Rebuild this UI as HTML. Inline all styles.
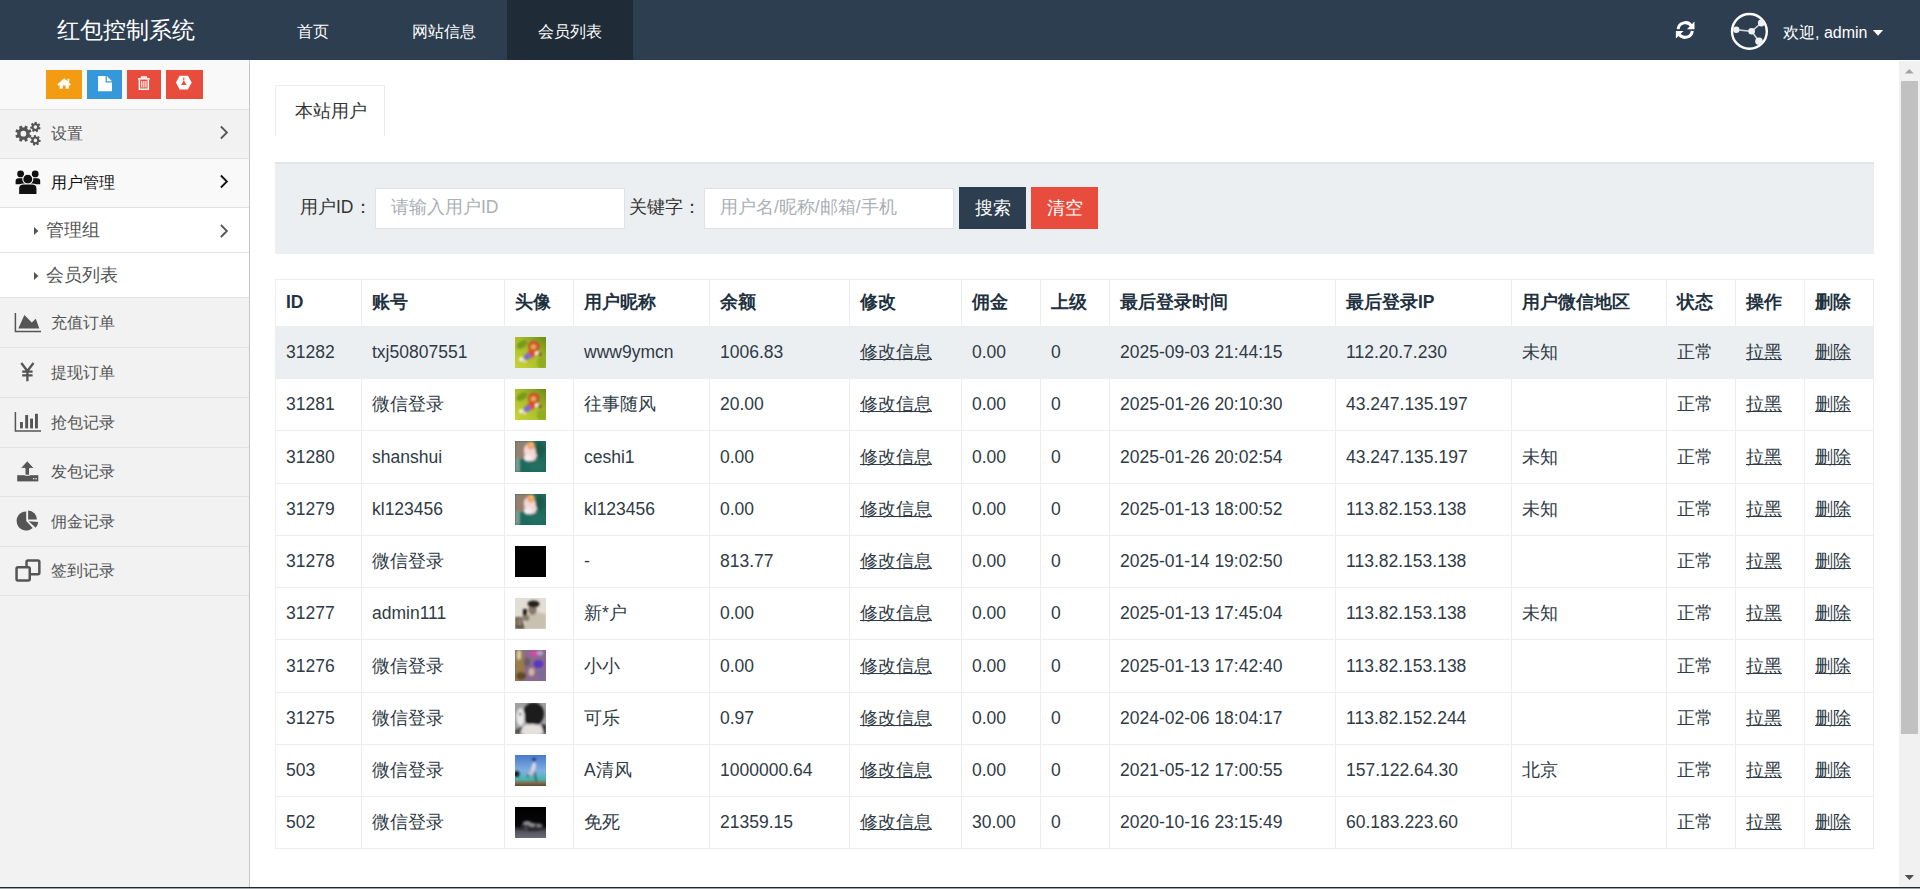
<!DOCTYPE html>
<html><head><meta charset="utf-8">
<style>
*{box-sizing:border-box;margin:0;padding:0}
html,body{width:1920px;height:889px;overflow:hidden;background:#fff;font-family:"Liberation Sans",sans-serif;color:#333}
.hdr{position:absolute;left:0;top:0;width:1920px;height:60px;background:#2c3e50;color:#fff}
.logo{position:absolute;left:57px;top:15px;font-size:23.2px;line-height:30px;white-space:nowrap}
.nav{position:absolute;top:0;height:60px;line-height:64px;font-size:16px;text-align:center;color:#fff}
.nav.act{background:#1f2b37}
.side{position:absolute;left:0;top:60px;width:250px;height:829px;background:#f2f2f2;border-right:1px solid #c6c6c6}
.tools{position:absolute;left:0;top:0;width:249px;height:50px;background:#f9f9f9;border-bottom:1px solid #e2e2e2}
.tb{position:absolute;top:10px;height:29px}
.tb svg{position:absolute;left:50%;top:50%;transform:translate(-50%,-50%)}
.mi{position:absolute;left:0;width:249px;border-bottom:1px solid #e2e2e2;font-size:16px;color:#555;white-space:nowrap}
.mi .t{position:absolute;left:51px;top:50%;transform:translateY(-50%);line-height:20px}
.mi .ic{position:absolute;left:15px;top:50%;transform:translateY(-50%)}
.mi .chev{position:absolute;left:219px;top:50%;transform:translateY(-50%)}
.main{position:absolute;left:250px;top:60px;width:1650px;height:829px;background:#fff}
.tab{position:absolute;left:275px;top:85px;width:110px;height:51px;border:1px solid #ececec;border-bottom:none;font-size:17.5px;color:#333}
.tab span{position:absolute;left:19px;top:15px;line-height:20px}
.panel{position:absolute;left:275px;top:162px;width:1599px;height:92px;background:#eceff1;border-top:2px solid #e3e6e8}
.lbl{position:absolute;font-size:17.5px;color:#333;line-height:20px;white-space:nowrap}
.inp{position:absolute;top:188px;height:41px;background:#fff;border:1px solid #dfe3e6;font-size:17.5px;color:#aab0b5;white-space:nowrap}
.inp span{position:absolute;left:15px;top:8px;line-height:20px}
.btn{position:absolute;top:187px;height:42px;color:#fff;font-size:17.5px;text-align:center;line-height:42px}
.vl{position:absolute;top:279px;width:1px;height:570px;background:#ededed}
.hl{position:absolute;left:275px;width:1599px;height:1px;background:#ededed}
.hi{position:absolute;left:275px;top:326px;width:1599px;height:52px;background:#eceff1}
.th{position:absolute;top:290px;font-size:17.5px;font-weight:bold;color:#22313f;line-height:24px;white-space:nowrap}
.td{position:absolute;font-size:17.5px;color:#2f3b46;line-height:26px;white-space:nowrap}
.td.u{text-decoration:underline}
.av{position:absolute;width:31px;height:31px}
.a1{background:radial-gradient(circle at 60% 45%,#c8502a 0 25%,transparent 40%),linear-gradient(135deg,#a8b838,#7a9a20)}
.a2{background:radial-gradient(circle at 55% 35%,#f0c0b0 0 22%,transparent 38%),linear-gradient(135deg,#8a7a70 0%,#2a6a60 60%,#1a5050)}
.a3{background:#000}
.a4{background:radial-gradient(circle at 55% 30%,#222 0 22%,transparent 35%),linear-gradient(180deg,#ddd6cc,#a8a090)}
.a5{background:radial-gradient(circle at 50% 40%,#c060c0 0 20%,transparent 45%),linear-gradient(135deg,#6a5030,#8a70a0,#504030)}
.a6{background:radial-gradient(circle at 40% 45%,#e8e8e8 0 25%,transparent 40%),linear-gradient(135deg,#888,#333 60%,#aaa)}
.a7{background:radial-gradient(circle at 55% 45%,#ddd 0 12%,transparent 25%),linear-gradient(180deg,#5a88c8 0%,#78a8d8 50%,#40a0a0 75%,#6a6040)}
.a8{background:radial-gradient(ellipse at 50% 60%,#777 0 18%,transparent 35%),#0c0c10}
.sb{position:absolute;left:1899px;top:61px;width:21px;height:826px;background:#f1f1f1}
.thumb{position:absolute;left:1901px;top:81px;width:17px;height:653px;background:#c1c1c1}
.ov{position:absolute;left:0;top:0;pointer-events:none}
.welc{position:absolute;left:1783px;top:23px;font-size:16px;line-height:20px;color:#fff;white-space:nowrap}
.bot{position:absolute;left:0;top:887px;width:1920px;height:2px;background:#25292c;border-bottom:1px solid #9aa4aa}
</style></head><body>
<div class="hdr">
  <div class="logo">红包控制系统</div>
  <div class="nav" style="left:255px;width:116px">首页</div>
  <div class="nav" style="left:381px;width:126px">网站信息</div>
  <div class="nav act" style="left:507px;width:126px">会员列表</div>
</div>
<div class="side">
  <div class="tools">
    <div class="tb" style="left:46px;width:36px;background:#f39c12"></div>
    <div class="tb" style="left:87px;width:35px;background:#3498db"></div>
    <div class="tb" style="left:127px;width:34px;background:#e74c3c"></div>
    <div class="tb" style="left:166px;width:37px;background:#e74c3c"></div>
  </div>
    <div class="mi" style="top:50px;height:49px;"><span class="t" style="">设置</span></div>
  <div class="mi" style="top:99px;height:49px;background:#f9f9f9;color:#111"><span class="t" style="">用户管理</span></div>
  <div class="mi" style="top:148px;height:45px;background:#fff"><span class="t" style="left:46px;font-size:17.5px">管理组</span></div>
  <div class="mi" style="top:193px;height:45px;background:#fff"><span class="t" style="left:46px;font-size:17.5px">会员列表</span></div>
  <div class="mi" style="top:238px;height:50px;"><span class="t" style="">充值订单</span></div>
  <div class="mi" style="top:288px;height:50px;"><span class="t" style="">提现订单</span></div>
  <div class="mi" style="top:338px;height:50px;"><span class="t" style="">抢包记录</span></div>
  <div class="mi" style="top:388px;height:49px;"><span class="t" style="">发包记录</span></div>
  <div class="mi" style="top:437px;height:50px;"><span class="t" style="">佣金记录</span></div>
  <div class="mi" style="top:487px;height:49px;"><span class="t" style="">签到记录</span></div>
</div>
<div class="main"></div>
<div class="tab"><span>本站用户</span></div>
<div class="panel"></div>
<div class="lbl" style="left:300px;top:197px">用户ID：</div>
<div class="inp" style="left:375px;width:250px"><span>请输入用户ID</span></div>
<div class="lbl" style="left:629px;top:197px">关键字：</div>
<div class="inp" style="left:704px;width:250px"><span>用户名/昵称/邮箱/手机</span></div>
<div class="btn" style="left:959px;width:67px;background:#2c3e50">搜索</div>
<div class="btn" style="left:1031px;width:67px;background:#e74c3c">清空</div>
<svg width="0" height="0" style="position:absolute"><defs>
<filter id="bl" x="-20%" y="-20%" width="140%" height="140%"><feGaussianBlur stdDeviation="0.85"/></filter>
<linearGradient id="g1" x1="0" y1="1" x2="1" y2="0"><stop offset="0" stop-color="#c8d434"/><stop offset="0.55" stop-color="#a8bc2a"/><stop offset="1" stop-color="#6a8a18"/></linearGradient>
<linearGradient id="g7" x1="0" y1="0" x2="0" y2="1"><stop offset="0" stop-color="#4a78cc"/><stop offset="0.5" stop-color="#80aee0"/><stop offset="0.66" stop-color="#62b4c8"/><stop offset="0.8" stop-color="#44b4a8"/><stop offset="0.88" stop-color="#84765a"/><stop offset="1" stop-color="#5a4a30"/></linearGradient>
<linearGradient id="g8" x1="0" y1="0" x2="0" y2="1"><stop offset="0" stop-color="#000"/><stop offset="0.6" stop-color="#08080a"/><stop offset="0.8" stop-color="#55555f"/><stop offset="1" stop-color="#6c6c78"/></linearGradient>
</defs></svg><div class="vl" style="left:275px"></div>
<div class="vl" style="left:361px"></div>
<div class="vl" style="left:504px"></div>
<div class="vl" style="left:573px"></div>
<div class="vl" style="left:709px"></div>
<div class="vl" style="left:849px"></div>
<div class="vl" style="left:961px"></div>
<div class="vl" style="left:1040px"></div>
<div class="vl" style="left:1109px"></div>
<div class="vl" style="left:1335px"></div>
<div class="vl" style="left:1511px"></div>
<div class="vl" style="left:1666px"></div>
<div class="vl" style="left:1735px"></div>
<div class="vl" style="left:1804px"></div>
<div class="vl" style="left:1873px"></div>
<div class="hl" style="top:279px"></div>
<div class="hl" style="top:326px"></div>
<div class="hl" style="top:378px"></div>
<div class="hl" style="top:430px"></div>
<div class="hl" style="top:483px"></div>
<div class="hl" style="top:535px"></div>
<div class="hl" style="top:587px"></div>
<div class="hl" style="top:639px"></div>
<div class="hl" style="top:692px"></div>
<div class="hl" style="top:744px"></div>
<div class="hl" style="top:796px"></div>
<div class="hl" style="top:848px"></div>
<div class="hi"></div>
<div class="th" style="left:286px">ID</div>
<div class="th" style="left:372px">账号</div>
<div class="th" style="left:515px">头像</div>
<div class="th" style="left:584px">用户昵称</div>
<div class="th" style="left:720px">余额</div>
<div class="th" style="left:860px">修改</div>
<div class="th" style="left:972px">佣金</div>
<div class="th" style="left:1051px">上级</div>
<div class="th" style="left:1120px">最后登录时间</div>
<div class="th" style="left:1346px">最后登录IP</div>
<div class="th" style="left:1522px">用户微信地区</div>
<div class="th" style="left:1677px">状态</div>
<div class="th" style="left:1746px">操作</div>
<div class="th" style="left:1815px">删除</div>
<div class="td" style="left:286px;top:339.0px">31282</div>
<div class="td" style="left:372px;top:339.0px">txj50807551</div>
<svg class="av" width="31" height="31" style="left:515px;top:337px"><rect width="31" height="31" fill="url(#g1)"/>
<g filter="url(#bl)">
<ellipse cx="7" cy="7.5" rx="6" ry="3.5" fill="#7a9a1c" transform="rotate(-30 7 7.5)"/>
<ellipse cx="27" cy="26" rx="5" ry="6" fill="#90ac22"/>
<ellipse cx="18.9" cy="9.4" rx="6" ry="5.8" fill="#c4562a"/>
<ellipse cx="18.4" cy="9.8" rx="2.8" ry="2.6" fill="#f2a456"/>
<ellipse cx="15.9" cy="17" rx="5" ry="3.6" fill="#e0461e" transform="rotate(-40 15.9 17)"/>
<ellipse cx="12.4" cy="19.6" rx="4" ry="2.8" fill="#7c6cd8" transform="rotate(-35 12.4 19.6)"/>
<circle cx="6.2" cy="22.3" r="2.3" fill="#f2f0e0"/>
<circle cx="9.8" cy="24.3" r="1.6" fill="#e0d8c8"/>
<circle cx="21.9" cy="16.3" r="2" fill="#f4f2ea"/>
<circle cx="24.9" cy="17.4" r="1.9" fill="#8a5422"/>
</g></svg>
<div class="td" style="left:584px;top:339.0px">www9ymcn</div>
<div class="td" style="left:720px;top:339.0px">1006.83</div>
<div class="td u" style="left:860px;top:339.0px">修改信息</div>
<div class="td" style="left:972px;top:339.0px">0.00</div>
<div class="td" style="left:1051px;top:339.0px">0</div>
<div class="td" style="left:1120px;top:339.0px">2025-09-03 21:44:15</div>
<div class="td" style="left:1346px;top:339.0px">112.20.7.230</div>
<div class="td" style="left:1522px;top:339.0px">未知</div>
<div class="td" style="left:1677px;top:339.0px">正常</div>
<div class="td u" style="left:1746px;top:339.0px">拉黑</div>
<div class="td u" style="left:1815px;top:339.0px">删除</div>
<div class="td" style="left:286px;top:391.0px">31281</div>
<div class="td" style="left:372px;top:391.0px">微信登录</div>
<svg class="av" width="31" height="31" style="left:515px;top:389px"><rect width="31" height="31" fill="url(#g1)"/>
<g filter="url(#bl)">
<ellipse cx="7" cy="7.5" rx="6" ry="3.5" fill="#7a9a1c" transform="rotate(-30 7 7.5)"/>
<ellipse cx="27" cy="26" rx="5" ry="6" fill="#90ac22"/>
<ellipse cx="18.9" cy="9.4" rx="6" ry="5.8" fill="#c4562a"/>
<ellipse cx="18.4" cy="9.8" rx="2.8" ry="2.6" fill="#f2a456"/>
<ellipse cx="15.9" cy="17" rx="5" ry="3.6" fill="#e0461e" transform="rotate(-40 15.9 17)"/>
<ellipse cx="12.4" cy="19.6" rx="4" ry="2.8" fill="#7c6cd8" transform="rotate(-35 12.4 19.6)"/>
<circle cx="6.2" cy="22.3" r="2.3" fill="#f2f0e0"/>
<circle cx="9.8" cy="24.3" r="1.6" fill="#e0d8c8"/>
<circle cx="21.9" cy="16.3" r="2" fill="#f4f2ea"/>
<circle cx="24.9" cy="17.4" r="1.9" fill="#8a5422"/>
</g></svg>
<div class="td" style="left:584px;top:391.0px">往事随风</div>
<div class="td" style="left:720px;top:391.0px">20.00</div>
<div class="td u" style="left:860px;top:391.0px">修改信息</div>
<div class="td" style="left:972px;top:391.0px">0.00</div>
<div class="td" style="left:1051px;top:391.0px">0</div>
<div class="td" style="left:1120px;top:391.0px">2025-01-26 20:10:30</div>
<div class="td" style="left:1346px;top:391.0px">43.247.135.197</div>
<div class="td" style="left:1677px;top:391.0px">正常</div>
<div class="td u" style="left:1746px;top:391.0px">拉黑</div>
<div class="td u" style="left:1815px;top:391.0px">删除</div>
<div class="td" style="left:286px;top:443.5px">31280</div>
<div class="td" style="left:372px;top:443.5px">shanshui</div>
<svg class="av" width="31" height="31" style="left:515px;top:441px"><rect width="31" height="31" fill="#1d6a5c"/>
<g filter="url(#bl)">
<path d="M0,0 H14 L11,18 H0Z" fill="#958070"/>
<path d="M0,17 H5 V31 H0Z" fill="#7a9a90"/>
<ellipse cx="15.5" cy="11.5" rx="6.2" ry="9" fill="#f2d8d4" transform="rotate(-18 15.5 11.5)"/>
<ellipse cx="16" cy="4.5" rx="3.8" ry="4" fill="#f2a070"/>
<ellipse cx="16.5" cy="3" rx="2" ry="2" fill="#f0c060"/>
<ellipse cx="13" cy="17" rx="4" ry="3.5" fill="#f6eaec"/>
<ellipse cx="25" cy="9" rx="4.5" ry="7" fill="#1a5a4c"/>
<ellipse cx="22" cy="25" rx="9" ry="6" fill="#226e60"/>
</g></svg>
<div class="td" style="left:584px;top:443.5px">ceshi1</div>
<div class="td" style="left:720px;top:443.5px">0.00</div>
<div class="td u" style="left:860px;top:443.5px">修改信息</div>
<div class="td" style="left:972px;top:443.5px">0.00</div>
<div class="td" style="left:1051px;top:443.5px">0</div>
<div class="td" style="left:1120px;top:443.5px">2025-01-26 20:02:54</div>
<div class="td" style="left:1346px;top:443.5px">43.247.135.197</div>
<div class="td" style="left:1522px;top:443.5px">未知</div>
<div class="td" style="left:1677px;top:443.5px">正常</div>
<div class="td u" style="left:1746px;top:443.5px">拉黑</div>
<div class="td u" style="left:1815px;top:443.5px">删除</div>
<div class="td" style="left:286px;top:496.0px">31279</div>
<div class="td" style="left:372px;top:496.0px">kl123456</div>
<svg class="av" width="31" height="31" style="left:515px;top:494px"><rect width="31" height="31" fill="#1d6a5c"/>
<g filter="url(#bl)">
<path d="M0,0 H14 L11,18 H0Z" fill="#958070"/>
<path d="M0,17 H5 V31 H0Z" fill="#7a9a90"/>
<ellipse cx="15.5" cy="11.5" rx="6.2" ry="9" fill="#f2d8d4" transform="rotate(-18 15.5 11.5)"/>
<ellipse cx="16" cy="4.5" rx="3.8" ry="4" fill="#f2a070"/>
<ellipse cx="16.5" cy="3" rx="2" ry="2" fill="#f0c060"/>
<ellipse cx="13" cy="17" rx="4" ry="3.5" fill="#f6eaec"/>
<ellipse cx="25" cy="9" rx="4.5" ry="7" fill="#1a5a4c"/>
<ellipse cx="22" cy="25" rx="9" ry="6" fill="#226e60"/>
</g></svg>
<div class="td" style="left:584px;top:496.0px">kl123456</div>
<div class="td" style="left:720px;top:496.0px">0.00</div>
<div class="td u" style="left:860px;top:496.0px">修改信息</div>
<div class="td" style="left:972px;top:496.0px">0.00</div>
<div class="td" style="left:1051px;top:496.0px">0</div>
<div class="td" style="left:1120px;top:496.0px">2025-01-13 18:00:52</div>
<div class="td" style="left:1346px;top:496.0px">113.82.153.138</div>
<div class="td" style="left:1522px;top:496.0px">未知</div>
<div class="td" style="left:1677px;top:496.0px">正常</div>
<div class="td u" style="left:1746px;top:496.0px">拉黑</div>
<div class="td u" style="left:1815px;top:496.0px">删除</div>
<div class="td" style="left:286px;top:548.0px">31278</div>
<div class="td" style="left:372px;top:548.0px">微信登录</div>
<svg class="av" width="31" height="31" style="left:515px;top:546px"><rect width="31" height="31" fill="#000"/></svg>
<div class="td" style="left:584px;top:548.0px">-</div>
<div class="td" style="left:720px;top:548.0px">813.77</div>
<div class="td u" style="left:860px;top:548.0px">修改信息</div>
<div class="td" style="left:972px;top:548.0px">0.00</div>
<div class="td" style="left:1051px;top:548.0px">0</div>
<div class="td" style="left:1120px;top:548.0px">2025-01-14 19:02:50</div>
<div class="td" style="left:1346px;top:548.0px">113.82.153.138</div>
<div class="td" style="left:1677px;top:548.0px">正常</div>
<div class="td u" style="left:1746px;top:548.0px">拉黑</div>
<div class="td u" style="left:1815px;top:548.0px">删除</div>
<div class="td" style="left:286px;top:600.0px">31277</div>
<div class="td" style="left:372px;top:600.0px">admin111</div>
<svg class="av" width="31" height="31" style="left:515px;top:598px"><rect width="31" height="31" fill="#e2ded6"/>
<g filter="url(#bl)">
<path d="M10,17 Q15,14 22,14.5 Q30,15 31,17 V31 H10Z" fill="#c8c0b0"/>
<ellipse cx="17.5" cy="12" rx="4.2" ry="5" fill="#8a7866"/>
<ellipse cx="18.5" cy="6" rx="6" ry="3.4" fill="#24201c"/>
<rect x="8" y="11" width="4" height="7" fill="#1c1a16"/>
<ellipse cx="11" cy="20" rx="3.5" ry="3" fill="#8a7a66"/>
<path d="M0,19 H7 L10,31 H0Z" fill="#5e5446"/>
<ellipse cx="4.5" cy="24" rx="3" ry="4" fill="#8c7c6a"/>
</g></svg>
<div class="td" style="left:584px;top:600.0px">新*户</div>
<div class="td" style="left:720px;top:600.0px">0.00</div>
<div class="td u" style="left:860px;top:600.0px">修改信息</div>
<div class="td" style="left:972px;top:600.0px">0.00</div>
<div class="td" style="left:1051px;top:600.0px">0</div>
<div class="td" style="left:1120px;top:600.0px">2025-01-13 17:45:04</div>
<div class="td" style="left:1346px;top:600.0px">113.82.153.138</div>
<div class="td" style="left:1522px;top:600.0px">未知</div>
<div class="td" style="left:1677px;top:600.0px">正常</div>
<div class="td u" style="left:1746px;top:600.0px">拉黑</div>
<div class="td u" style="left:1815px;top:600.0px">删除</div>
<div class="td" style="left:286px;top:652.5px">31276</div>
<div class="td" style="left:372px;top:652.5px">微信登录</div>
<svg class="av" width="31" height="31" style="left:515px;top:650px"><rect width="31" height="31" fill="#8a6a8c"/>
<g filter="url(#bl)">
<path d="M0,0 H9 V31 H0Z" fill="#9a7c44"/>
<ellipse cx="4" cy="5" rx="2" ry="5" fill="#d8d0b8"/>
<ellipse cx="19" cy="3.5" rx="4" ry="3" fill="#d04ca4"/>
<ellipse cx="25" cy="3" rx="3" ry="2.5" fill="#b8a0c8"/>
<ellipse cx="23.5" cy="14" rx="5" ry="4" fill="#5a34c4"/>
<ellipse cx="16.5" cy="22" rx="3" ry="4" fill="#d2b4a4"/>
<ellipse cx="6" cy="26" rx="5" ry="4" fill="#5c4c2c"/>
<ellipse cx="27" cy="24" rx="4" ry="6" fill="#7a6a9a"/>
<ellipse cx="12" cy="12" rx="3" ry="4" fill="#6a5a6a"/>
</g></svg>
<div class="td" style="left:584px;top:652.5px">小小</div>
<div class="td" style="left:720px;top:652.5px">0.00</div>
<div class="td u" style="left:860px;top:652.5px">修改信息</div>
<div class="td" style="left:972px;top:652.5px">0.00</div>
<div class="td" style="left:1051px;top:652.5px">0</div>
<div class="td" style="left:1120px;top:652.5px">2025-01-13 17:42:40</div>
<div class="td" style="left:1346px;top:652.5px">113.82.153.138</div>
<div class="td" style="left:1677px;top:652.5px">正常</div>
<div class="td u" style="left:1746px;top:652.5px">拉黑</div>
<div class="td u" style="left:1815px;top:652.5px">删除</div>
<div class="td" style="left:286px;top:705.0px">31275</div>
<div class="td" style="left:372px;top:705.0px">微信登录</div>
<svg class="av" width="31" height="31" style="left:515px;top:703px"><rect width="31" height="31" fill="#a0a0a0"/>
<g filter="url(#bl)">
<ellipse cx="18.5" cy="11" rx="10.5" ry="11.5" fill="#1c1c1c"/>
<ellipse cx="5.5" cy="14" rx="4.2" ry="9" fill="#e8e8ea"/>
<ellipse cx="5.2" cy="11" rx="1.2" ry="1.5" fill="#606060"/>
<ellipse cx="17" cy="27" rx="12" ry="6" fill="#e4e0dc"/>
<path d="M26,21 L31,22 V31 H29Z" fill="#2a2a2a"/>
<path d="M0,27 L8,23 L5,31 H0Z" fill="#505050"/>
</g></svg>
<div class="td" style="left:584px;top:705.0px">可乐</div>
<div class="td" style="left:720px;top:705.0px">0.97</div>
<div class="td u" style="left:860px;top:705.0px">修改信息</div>
<div class="td" style="left:972px;top:705.0px">0.00</div>
<div class="td" style="left:1051px;top:705.0px">0</div>
<div class="td" style="left:1120px;top:705.0px">2024-02-06 18:04:17</div>
<div class="td" style="left:1346px;top:705.0px">113.82.152.244</div>
<div class="td" style="left:1677px;top:705.0px">正常</div>
<div class="td u" style="left:1746px;top:705.0px">拉黑</div>
<div class="td u" style="left:1815px;top:705.0px">删除</div>
<div class="td" style="left:286px;top:757.0px">503</div>
<div class="td" style="left:372px;top:757.0px">微信登录</div>
<svg class="av" width="31" height="31" style="left:515px;top:755px"><rect width="31" height="31" fill="url(#g7)"/>
<g filter="url(#bl)">
<ellipse cx="1.5" cy="19" rx="3" ry="3" fill="#101c24"/>
<ellipse cx="18.5" cy="12.5" rx="2.2" ry="5" fill="#d8d4e8" transform="rotate(15 18.5 12.5)"/>
<ellipse cx="16" cy="18" rx="3.2" ry="1.8" fill="#d8c0c8" transform="rotate(-20 16 18)"/>
<path d="M13.5,19 L12.5,22" stroke="#2a3a50" stroke-width="1.2"/>
<path d="M19.5,17 L21.5,27" stroke="#3a5a6a" stroke-width="1.6"/>
<circle cx="19" cy="4.5" r="1.7" fill="#1a2a5c"/>
</g></svg>
<div class="td" style="left:584px;top:757.0px">A清风</div>
<div class="td" style="left:720px;top:757.0px">1000000.64</div>
<div class="td u" style="left:860px;top:757.0px">修改信息</div>
<div class="td" style="left:972px;top:757.0px">0.00</div>
<div class="td" style="left:1051px;top:757.0px">0</div>
<div class="td" style="left:1120px;top:757.0px">2021-05-12 17:00:55</div>
<div class="td" style="left:1346px;top:757.0px">157.122.64.30</div>
<div class="td" style="left:1522px;top:757.0px">北京</div>
<div class="td" style="left:1677px;top:757.0px">正常</div>
<div class="td u" style="left:1746px;top:757.0px">拉黑</div>
<div class="td u" style="left:1815px;top:757.0px">删除</div>
<div class="td" style="left:286px;top:809.0px">502</div>
<div class="td" style="left:372px;top:809.0px">微信登录</div>
<svg class="av" width="31" height="31" style="left:515px;top:807px"><rect width="31" height="31" fill="url(#g8)"/>
<g filter="url(#bl)">
<ellipse cx="17" cy="19.5" rx="11.5" ry="4.2" fill="#2a2a2e"/>
<ellipse cx="12" cy="16" rx="4" ry="2" fill="#8a8a90"/>
<ellipse cx="17" cy="18" rx="3" ry="1.8" fill="#909096"/>
<ellipse cx="24" cy="18.5" rx="3" ry="1.8" fill="#7a7a80"/>
<circle cx="11" cy="21.5" r="1.8" fill="#505058"/>
</g></svg>
<div class="td" style="left:584px;top:809.0px">免死</div>
<div class="td" style="left:720px;top:809.0px">21359.15</div>
<div class="td u" style="left:860px;top:809.0px">修改信息</div>
<div class="td" style="left:972px;top:809.0px">30.00</div>
<div class="td" style="left:1051px;top:809.0px">0</div>
<div class="td" style="left:1120px;top:809.0px">2020-10-16 23:15:49</div>
<div class="td" style="left:1346px;top:809.0px">60.183.223.60</div>
<div class="td" style="left:1677px;top:809.0px">正常</div>
<div class="td u" style="left:1746px;top:809.0px">拉黑</div>
<div class="td u" style="left:1815px;top:809.0px">删除</div>
<div class="sb"></div>
<div class="thumb"></div>
<div class="welc">欢迎, admin</div>
<div class="bot"></div>
<svg class="ov" width="1920" height="889" viewBox="0 0 1920 889"><path fill-rule="evenodd" fill="#555" d="M29.54,134.53 L31.49,135.57 L30.44,138.09 L28.33,137.46 L27.16,138.63 L27.79,140.74 L25.27,141.79 L24.23,139.84 L22.57,139.84 L21.53,141.79 L19.01,140.74 L19.64,138.63 L18.47,137.46 L16.36,138.09 L15.31,135.57 L17.26,134.53 L17.26,132.87 L15.31,131.83 L16.36,129.31 L18.47,129.94 L19.64,128.77 L19.01,126.66 L21.53,125.61 L22.57,127.56 L24.23,127.56 L25.27,125.61 L27.79,126.66 L27.16,128.77 L28.33,129.94 L30.44,129.31 L31.49,131.83 L29.54,132.87ZM26.30,133.70 A2.9,2.9 0 1 0 20.50,133.70 A2.9,2.9 0 1 0 26.30,133.70ZM39.30,127.11 L40.67,127.69 L40.08,129.59 L38.63,129.29 L37.82,130.16 L38.22,131.59 L36.37,132.31 L35.70,130.99 L34.52,130.90 L33.65,132.10 L31.93,131.11 L32.55,129.76 L31.88,128.78 L30.40,128.85 L30.10,126.89 L31.54,126.53 L31.89,125.39 L30.91,124.28 L32.26,122.83 L33.44,123.73 L34.55,123.29 L34.80,121.83 L36.78,121.98 L36.82,123.47 L37.84,124.06 L39.15,123.35 L40.26,124.99 L39.12,125.94ZM37.20,127.10 A1.8,1.8 0 1 0 33.60,127.10 A1.8,1.8 0 1 0 37.20,127.10ZM39.23,139.64 L40.68,139.93 L40.48,141.91 L39.00,141.91 L38.38,142.92 L39.06,144.24 L37.39,145.31 L36.47,144.15 L35.29,144.30 L34.68,145.65 L32.80,145.02 L33.13,143.57 L32.28,142.74 L30.85,143.11 L30.17,141.25 L31.51,140.61 L31.62,139.43 L30.44,138.53 L31.48,136.84 L32.81,137.48 L33.81,136.84 L33.77,135.36 L35.74,135.11 L36.07,136.56 L37.19,136.94 L38.33,135.98 L39.75,137.37 L38.82,138.53ZM37.20,140.40 A1.8,1.8 0 1 0 33.60,140.40 A1.8,1.8 0 1 0 37.20,140.40Z"/><g fill="#111"><circle cx="20.6" cy="173.9" r="3.4"/><circle cx="35.2" cy="173.9" r="3.4"/><path d="M15.6,184.2 V181 Q15.6,178.2 18.6,178.2 H22.6 Q25.6,178.2 25.6,181 V184.2Z"/><path d="M30.2,184.2 V181 Q30.2,178.2 33.2,178.2 H37.2 Q40.2,178.2 40.2,181 V184.2Z"/><g stroke="#f9f9f9" stroke-width="1.1"><circle cx="27.8" cy="179.2" r="5"/><path d="M18.6,194.6 V188.6 Q18.6,184 23.5,184 H32.1 Q37,184 37,188.6 V194.6Z"/></g></g><path d="M15.4,313 V331.6 H41" fill="none" stroke="#555" stroke-width="1.5"/><path fill="#555" d="M18.3,328.6 L24.4,315 L31.8,322.6 L35.8,318.7 L39.3,328.6Z"/><path d="M21.3,363 L27.4,371 L33.5,363 M27.4,371 V381.2 M22.2,371.6 H32.6 M22.2,375.4 H32.6" fill="none" stroke="#555" stroke-width="2.3"/><path d="M15.4,412 V430.9 H41" fill="none" stroke="#555" stroke-width="1.5"/><g fill="#555"><rect x="20" y="422" width="2.9" height="6.4"/><rect x="25.2" y="415" width="2.9" height="13.4"/><rect x="30.1" y="418.6" width="2.9" height="9.8"/><rect x="35" y="413.8" width="2.9" height="14.6"/></g><path fill="#555" d="M17.2,475.2 H38.3 V481.4 H17.2Z"/><path fill="#555" stroke="#f2f2f2" stroke-width="1" d="M27.3,460.8 L34.3,468.4 H29.6 V475.2 H25 V468.4 H20.3Z"/><g fill="#f2f2f2"><circle cx="33.7" cy="478.8" r="0.8"/><circle cx="36.1" cy="478.8" r="0.8"/></g><g fill="#555"><path d="M26.2,521 L32.75,528.02 A9.6,9.6 0 1 1 26.20,511.40Z"/><path d="M28.1,519.4 L28.10,510.60 A8.8,8.8 0 0 1 36.90,519.40Z"/><path d="M28.6,521.3 L38.18,521.97 A9.6,9.6 0 0 1 35.73,527.72Z"/></g><rect x="26.55" y="560.55" width="12.8" height="13.8" rx="1.5" fill="none" stroke="#555" stroke-width="2.5"/><rect x="16.55" y="567.25" width="13.2" height="13.3" rx="1.5" fill="#f2f2f2" stroke="#555" stroke-width="2.5"/><path d="M220.9,126.5 L226.9,132.5 L220.9,138.5" fill="none" stroke="#555" stroke-width="1.8"/><path d="M220.9,175.5 L226.9,181.5 L220.9,187.5" fill="none" stroke="#111" stroke-width="1.8"/><path d="M220.9,225 L226.9,231 L220.9,237" fill="none" stroke="#555" stroke-width="1.8"/><path fill="#555" d="M34,227 L38.4,231 L34,235Z M34,272 L38.4,276 L34,280Z"/><g fill="#fff"><path d="M57.3,84.6 L64.2,78.2 L71,84.6 L69.6,85.8 L64.2,80.8 L58.7,85.8Z"/><path d="M59.6,84.2 L64.2,80.2 L68.8,84.2 V88.8 H65.6 V85.6 H62.8 V88.8 H59.6Z"/><rect x="67.6" y="78.8" width="1.6" height="3.4"/><path d="M98,76 H105.6 V82.4 H112 V91.3 H98Z"/><path d="M106.8,76 L112,81.2 H106.8Z"/></g><g fill="none" stroke="#fff" stroke-width="1.5"><path d="M141.6,78.2 V77.1 H146.2 V78.2"/><path d="M137.9,78.8 H149.8"/><path d="M139.4,79.5 V89.2 H148.3 V79.5"/><path d="M141.8,81 V87.6 M143.85,81 V87.6 M145.9,81 V87.6" stroke-width="1.1"/></g><path fill="#fff" d="M179.6,75.8 H187.9 L191.7,82.6 L187.9,89.4 H179.6 L175.9,82.6Z"/><g fill="none" stroke="#e74c3c" stroke-width="1.1"><path d="M183.8,77.6 V80.4"/></g><path fill="#e74c3c" d="M183.8,80.2 L186.5,85 H181.1Z"/><g fill="none" stroke="#fff" stroke-width="3"><path d="M1678.1,29.2 A7.3,7.3 0 0 1 1691.6,26.2"/><path d="M1692.3,30.8 A7.3,7.3 0 0 1 1678.8,33.8"/></g><g fill="#fff"><path d="M1694.5,21.6 V29.2 H1686.9Z"/><path d="M1675.9,38.6 V31 H1683.5Z"/></g><circle cx="1749.4" cy="31.4" r="17.4" fill="#2c3e50" stroke="#fff" stroke-width="2.4"/><g fill="none" stroke="#c9d0d8" stroke-width="1.6"><path d="M1736.3,29.7 L1751.6,31.3 L1761.3,23 M1751.6,31.3 L1759,41.3"/></g><g fill="#eef0f2"><circle cx="1736.3" cy="29.7" r="3.2"/><circle cx="1751.6" cy="31.3" r="3.3"/><circle cx="1761.3" cy="23" r="3.4"/><circle cx="1759" cy="41.3" r="3.8"/></g><path fill="#fff" d="M1872.8,30 H1883.2 L1878,35.8Z"/><path fill="#a3a3a3" d="M1904.9,73.6 H1913.7 L1909.3,68.9Z"/><path fill="#505050" d="M1904.8,875 H1914 L1909.4,880Z"/></svg>
</body></html>
